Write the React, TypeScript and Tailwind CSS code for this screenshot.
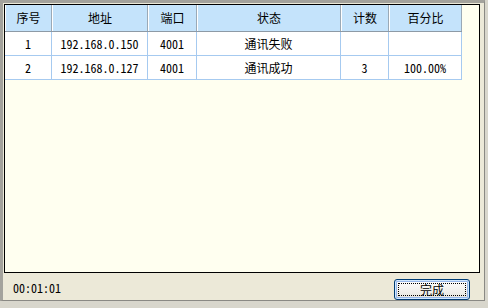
const cols = "grid w-[457px] grid-cols-[47px_96px_49px_144px_48px_73px]";

const headers = ["序号", "地址", "端口", "状态", "计数", "百分比"];

const rows = [
  ["1", "192.168.0.150", "4001", "通讯失败", "", ""],
  ["2", "192.168.0.127", "4001", "通讯成功", "3", "100.00%"],
];

const isCjk = (s: string) => /[\u4e00-\u9fff]/.test(s);

const App = () => {
  return (
    <div className="w-[488px] h-[308px] bg-[#d8d6cc] overflow-hidden">
      <div className="w-[485px] h-[301px] flex flex-col bg-[#ECE9D8] border-t-[3px] border-l-[3px] border-r border-b border-t-[#a3a29c] border-l-[#a3a29c] border-r-[#8a8984] border-b-[#8a8984]">
        {/* List view */}
        <div className="ml-[1px] mt-[1px] w-[476px] h-[269px] border border-black bg-[#FFFFF0]">
          <div className={`${cols} h-[27px] bg-[#C4E3FB] border-b border-[#8d9aa6]`}>
            {headers.map((h, i) => (
              <div
                key={i}
                className="flex items-center justify-center border-l border-l-white border-r border-r-[#9aa9b6] text-[12px] text-black [font-family:'Noto_Sans_CJK_SC',sans-serif] leading-none"
              >
                {h}
              </div>
            ))}
          </div>
          {rows.map((r, ri) => (
            <div key={ri} className={`${cols} h-[24px] bg-white`}>
              {r.map((c, ci) => (
                <div
                  key={ci}
                  className={`flex items-center justify-center border-r border-b border-[#A6CAF0] leading-none text-black ${
                    isCjk(c)
                      ? "text-[12px] [font-family:'Noto_Sans_CJK_SC',sans-serif]"
                      : "text-[12px] [font-family:'Noto_Sans_Mono_CJK_SC','Liberation_Mono',monospace]"
                  }`}
                >
                  {c}
                </div>
              ))}
            </div>
          ))}
        </div>

        {/* Bottom bar */}
        <div className="flex-1 flex items-start justify-between pl-[10px] pr-[14px]">
          <span className="mt-[9px] text-[12px] leading-none text-black [font-family:'Noto_Sans_Mono_CJK_SC','Liberation_Mono',monospace]">
            00:01:01
          </span>
          <button className="mt-[6px] w-[76px] h-[21px] rounded-[3px] border border-[#003C74] bg-gradient-to-b from-white to-[#E6E5DE] shadow-[inset_0_0_0_1px_#CEE7FF,inset_0_0_0_2px_#98B8EA] p-[3px] flex">
            <span className="flex-1 flex items-center justify-center border border-dotted border-black text-[12px] leading-none text-black [font-family:'Noto_Sans_CJK_SC',sans-serif]">
              完成
            </span>
          </button>
        </div>
      </div>
    </div>
  );
};

export default App;
